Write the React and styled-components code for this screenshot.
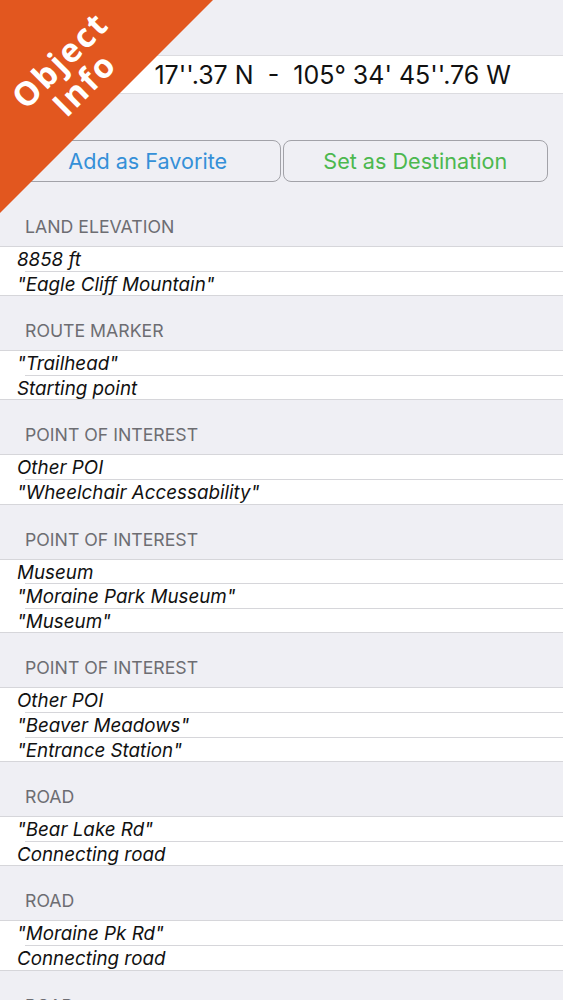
import React from "react";
import styled, { createGlobalStyle } from "styled-components";

const GlobalStyle = createGlobalStyle`
  html, body {
    margin: 0;
    padding: 0;
    background: #efeff4;
  }
  body {
    font-family: Inter, "Liberation Sans", sans-serif;
    -webkit-font-smoothing: antialiased;
  }
`;

const Screen = styled.div`
  position: relative;
  width: 563px;
  height: 1000px;
  overflow: hidden;
  background: #efeff4;
  padding-top: 55px;
  box-sizing: border-box;
`;

const Corner = styled.div`
  position: absolute;
  left: 0;
  top: 0;
  width: 213px;
  height: 213px;
  background: #e2571f;
  clip-path: polygon(0 0, 100% 0, 0 100%);
  z-index: 5;
`;

const CornerLabel = styled.div`
  position: absolute;
  left: -28px;
  top: 38px;
  width: 200px;
  height: 68px;
  transform: rotate(-45deg);
  color: #fff;
  font-family: "Open Sans", "Liberation Sans", sans-serif;
  font-weight: 700;
  font-size: 33px;
  letter-spacing: 2px;
  line-height: 34px;
  text-align: center;
`;

const CoordRow = styled.div`
  height: 37px;
  background: #fff;
  border-top: 1px solid #dcdce0;
  border-bottom: 1px solid #dcdce0;
  display: flex;
  align-items: center;
  justify-content: flex-end;
  padding-right: 52px;
  white-space: pre;
  overflow: hidden;
  font-size: 25px;
  color: #111;
`;

const ButtonRow = styled.div`
  display: flex;
  gap: 2px;
  padding: 0 15px;
  margin-top: 46px;
`;

const ActionButton = styled.button`
  flex: 1;
  height: 42px;
  background: transparent;
  border: 1px solid #a2a2a8;
  border-radius: 8px;
  font-family: Inter, "Liberation Sans", sans-serif;
  font-size: 21.6px;
  color: ${(p) => p.$color};
  padding: 0;
`;

const Sections = styled.div`
  margin-top: 10px;
`;

const SectionHeader = styled.div`
  height: 54px;
  box-sizing: border-box;
  display: flex;
  align-items: flex-end;
  padding: 0 0 9px 25px;
  line-height: 20px;
  font-size: 17.7px;
  color: #6d6d72;
  text-transform: uppercase;
`;

const Group = styled.div`
  background: #fff;
  border-top: 1px solid #d6d6da;
  border-bottom: 1px solid #d6d6da;
`;

const Row = styled.div`
  height: 23.6px;
  line-height: 25px;
  padding-left: 17px;
  font-size: 18.8px;
  font-style: italic;
  color: #111;
  white-space: nowrap;
  overflow: hidden;
`;

const Separator = styled.div`
  height: 1px;
  margin-left: 25px;
  background: #d6d6da;
`;

const sections = [
  { title: "Land Elevation", rows: ["8858 ft", '"Eagle Cliff Mountain"'] },
  { title: "Route Marker", rows: ['"Trailhead"', "Starting point"] },
  { title: "Point of Interest", rows: ["Other POI", '"Wheelchair Accessability"'] },
  { title: "Point of Interest", rows: ["Museum", '"Moraine Park Museum"', '"Museum"'] },
  { title: "Point of Interest", rows: ["Other POI", '"Beaver Meadows"', '"Entrance Station"'] },
  { title: "Road", rows: ['"Bear Lake Rd"', "Connecting road"] },
  { title: "Road", rows: ['"Moraine Pk Rd"', "Connecting road"] },
  { title: "Road", rows: ['"Fall River Rd"', "Connecting road"] },
];

export default function App() {
  return (
    <Screen>
      <GlobalStyle />
      <Corner>
        <CornerLabel>
          Object
          <br />
          Info
        </CornerLabel>
      </Corner>
      <CoordRow>{"17''.37 N  -  105° 34' 45''.76 W"}</CoordRow>
      <ButtonRow>
        <ActionButton $color="#3590d8">Add as Favorite</ActionButton>
        <ActionButton $color="#4cb84f">Set as Destination</ActionButton>
      </ButtonRow>
      <Sections>
        {sections.map((s, i) => (
          <div key={i}>
            <SectionHeader>{s.title}</SectionHeader>
            <Group>
              {s.rows.map((r, j) => (
                <React.Fragment key={j}>
                  {j > 0 && <Separator />}
                  <Row>{r}</Row>
                </React.Fragment>
              ))}
            </Group>
          </div>
        ))}
      </Sections>
    </Screen>
  );
}
